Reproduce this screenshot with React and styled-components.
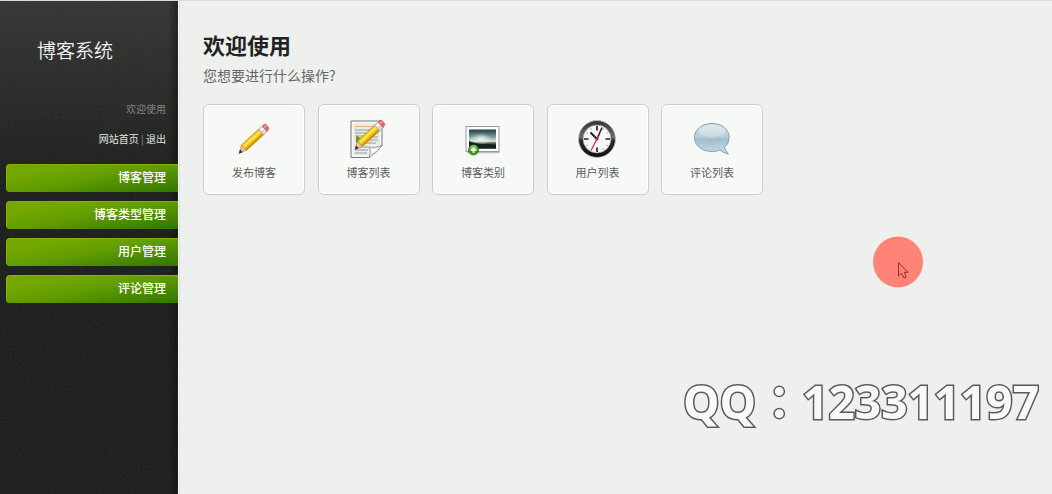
import React from "react";
import styled, { createGlobalStyle } from "styled-components";

const GlobalStyle = createGlobalStyle`
  * { box-sizing: border-box; }
  body {
    margin: 0;
    background: #edf0ed;
    color: #555;
    font-family: "Noto Sans CJK SC", sans-serif;
  }
`;

const Page = styled.div`
  position: relative;
  display: flex;
  min-height: 100vh;
  border-top: 1px solid #d9dcd9;
  overflow: hidden;
`;

const Sidebar = styled.aside`
  position: relative;
  flex: none;
  display: flex;
  flex-direction: column;
  width: 180px;
  padding: 35px 2px 0 6px;
  color: #eee;
  background:
    linear-gradient(90deg, transparent 168px, rgba(0, 0, 0, 0.4) 178px, #fff 178px, #fff 179px, #dcdfdc 179px),
    linear-gradient(#313431, #191c19 180px, #191c19);
`;

const Grain = styled.svg`
  position: absolute;
  top: 0;
  left: 0;
  width: 178px;
  height: 100%;
  opacity: 0.09;
  pointer-events: none;
`;

const Brand = styled.h1`
  margin: 0 0 38px 31px;
  font-size: 19px;
  line-height: 28px;
  font-weight: 350;
  color: #f4f5f4;
`;

const Profile = styled.div`
  padding-right: 12px;
  text-align: right;
  font-size: 10px;
  line-height: 14px;
  color: #808280;
`;

const Links = styled.p`
  margin: 16px 0 18px;
  color: #888;
`;

const ProfileLink = styled.a`
  color: #e4e6e4;
  text-decoration: none;
`;

const Menu = styled.ul`
  position: relative;
  display: flex;
  flex-direction: column;
  gap: 9px;
  margin: 0;
  padding: 0;
  list-style: none;
`;

const MenuLink = styled.a`
  display: block;
  height: 28px;
  padding-right: 12px;
  border: solid #86b300;
  border-width: 1px 0 0 1px;
  border-radius: 4px 0 0 4px;
  background: linear-gradient(170deg, #74a800 20%, #619c00 50%, #367900 95%);
  text-align: right;
  font-size: 12px;
  line-height: 24px;
  font-weight: 500;
  color: #fff;
  text-decoration: none;
`;

const Main = styled.main`
  flex: 1;
  min-width: 0;
  padding: 27px 24px 24px 23px;
`;

const Heading = styled.h2`
  margin: 0;
  font-size: 22px;
  line-height: 32px;
  font-weight: 700;
  color: #222;
`;

const Intro = styled.p`
  margin: 4px 0 18px;
  font-size: 14px;
  line-height: 22px;
  font-weight: 400;
  color: #666;
`;

const Shortcuts = styled.ul`
  display: grid;
  grid-template-columns: repeat(5, 102px);
  justify-content: space-between;
  max-width: 560px;
  margin: 0;
  padding: 0;
  list-style: none;
`;

const Shortcut = styled.a`
  display: flex;
  flex-direction: column;
  align-items: center;
  height: 91px;
  padding-top: 14px;
  border: 1px solid #ccc;
  border-radius: 6px;
  background: #f7f9f7;
  box-shadow: inset 0 0 0 1px #fff;
  font-size: 11px;
  line-height: 16px;
  color: #5c5c5c;
  text-decoration: none;
`;

const Picture = styled.svg`
  width: 40px;
  height: 40px;
  margin-bottom: 5px;
`;

const Contact = styled.div`
  position: absolute;
  right: 13px;
  bottom: 60px;
  font-family: "Open Sans", "Noto Sans CJK TC", sans-serif;
  font-size: 46px;
  line-height: 66px;
  font-weight: 700;
  white-space: nowrap;
  color: #f8faf8;
  -webkit-text-stroke: 3px #5a5a5a;
  paint-order: stroke fill;
  will-change: transform;
  pointer-events: none;
`;

const Pointer = styled.svg`
  position: absolute;
  top: 235px;
  left: 873px;
  width: 50px;
  height: 52px;
  pointer-events: none;
`;

function PencilShape() {
  return (
    <g>
      <path d="M4.500 35 L7 26 L12.500 32Z" fill="#e8c39a" stroke="#a87c50" strokeWidth=".6" />
      <path d="M4 35.500 L5.500 31 L8.500 34Z" fill="#333" />
      <path d="M7 26 L26 8.500 L31.500 14.500 L12.500 32Z" fill="#f0bf16" stroke="#b98a00" strokeWidth=".7" />
      <path d="M8.500 27 L26.500 10.300 L28.300 12.200 L10 29Z" fill="#ffe25a" />
      <path d="M11.500 30.500 L29.800 13.600 L31.300 15 L12.700 31.700Z" fill="#cf9200" />
      <path d="M25.500 9 L29.500 5.500 L35 11.300 L31.200 15Z" fill="#d5d8e2" stroke="#9ba0ac" strokeWidth=".7" />
      <path d="M27 9 L29.600 6.800 L31.500 8.800 L29 11Z" fill="#fff" />
      <path d="M29.500 5.500 L32 3.600 Q33 3 34 4 L36.500 7 Q37.200 8 36.500 9 L35 11.300Z" fill="#e9635f" stroke="#c64b48" strokeWidth=".6" />
      <path d="M31 5.800 L33 4.500 L34.500 6 L32.500 7.500Z" fill="#ffa19b" />
    </g>
  );
}

function PencilPicture() {
  return (
    <Picture viewBox="0 0 40 40" aria-hidden="true">
      <g transform="translate(1 2) scale(.92)"><PencilShape /></g>
    </Picture>
  );
}

function ArticlePicture() {
  return (
    <Picture viewBox="0 0 40 40" aria-hidden="true">
      <path d="M2 2H33V26.500Q28 32 20 38.500H2Z" fill="#f8f8f8" stroke="#777" />
      <path d="M4 4H31V26H21L19 36.500H4Z" fill="#e9ebeb" />
      <path d="M6 7.500H29" stroke="#edaa87" />
      <path d="M6 11H29M6 14H29M17 18H29M17 21H29M17 24H27M6 28H20M6 31H19M6 34H18" stroke="#b4b7b7" strokeWidth="1.500" />
      <path d="M7 16H16V24H7Z" fill="#679238" />
      <path d="M7 16 L12 20 L16 18V16Z" fill="#b2d88c" />
      <path d="M20 38.500 Q22 34 20.500 28 Q26 29 33 26.500 Q29 33 20 38.500Z" fill="#e2e4e4" stroke="#888" strokeWidth=".8" />
      <path d="M22 35 Q23.500 33 22.500 30 Q26 30.500 30 29Z" fill="#fff" />
      <g transform="translate(2 -2) scale(.92)"><PencilShape /></g>
    </Picture>
  );
}

function PhotoPicture() {
  return (
    <Picture viewBox="0 0 40 40" aria-hidden="true">
      <defs>
        <linearGradient id="sky" x1="0" y1="0" x2="0" y2="1">
          <stop offset="0" stopColor="#1e3e42" />
          <stop offset=".35" stopColor="#6f9194" />
          <stop offset=".62" stopColor="#dbe5d9" />
          <stop offset=".7" stopColor="#637067" />
          <stop offset=".85" stopColor="#101612" />
        </linearGradient>
        <radialGradient id="glow">
          <stop offset="0" stopColor="#f4fbea" stopOpacity=".9" />
          <stop offset="1" stopColor="#f4fbea" stopOpacity="0" />
        </radialGradient>
      </defs>
      <path d="M4 33.500 H36.500" stroke="#bbb" strokeWidth="1.500" />
      <rect x="3" y="7.500" width="33" height="25" fill="#fff" stroke="#999" />
      <rect x="6" y="10.500" width="27" height="19" fill="url(#sky)" />
      <ellipse cx="18" cy="20" rx="11" ry="6" fill="url(#glow)" />
      <path d="M6 22 Q12 25 20 25 T33 26V29.500H6Z" fill="#14201a" />
      <circle cx="10.500" cy="31" r="5" fill="#3d9a17" stroke="#267007" strokeWidth=".8" />
      <path d="M6.500 30 A4 4 0 0 1 14.500 30Z" fill="#78c04c" />
      <path d="M10.500 28.200V33.800M7.700 31H13.300" stroke="#fff" strokeWidth="1.800" />
    </Picture>
  );
}

function ClockPicture() {
  return (
    <Picture viewBox="0 0 40 40" aria-hidden="true">
      <defs>
        <linearGradient id="rim" x1="0" y1="0" x2="0" y2="1">
          <stop offset="0" stopColor="#333" />
          <stop offset=".45" stopColor="#6a6a6a" />
          <stop offset=".55" stopColor="#262626" />
          <stop offset="1" stopColor="#111" />
        </linearGradient>
      </defs>
      <g transform="translate(-1 0)">
        <circle cx="20" cy="20" r="18.500" fill="url(#rim)" stroke="#bbb" strokeWidth=".8" />
        <circle cx="20" cy="20" r="14" fill="#f7f7f7" stroke="#888" strokeWidth=".6" />
        <path d="M20 7V11.500M20 28.500V33M7 20H11.500M28.500 20H33" stroke="#222" strokeWidth="1.700" />
        <path d="M26 9.600V10.600M30 13.500V14.500M30 26V27M26 29.600V30.600M10 13.500V14.500M10 26V27M14 9.600V10.600" stroke="#777" />
        <path d="M20 20 L13.500 13.500" stroke="#1c1c1c" strokeWidth="2" />
        <path d="M20 20 L25 8.500" stroke="#1c1c1c" strokeWidth="1.500" />
        <path d="M21.500 17 L14 31.500" stroke="#d42c43" strokeWidth="1.300" />
        <circle cx="20" cy="20" r="1.600" fill="#c3283b" />
      </g>
    </Picture>
  );
}

function CommentPicture() {
  return (
    <Picture viewBox="0 0 40 40" aria-hidden="true">
      <defs>
        <linearGradient id="bubble" x1="0" y1="0" x2="0" y2="1">
          <stop offset="0" stopColor="#d6e3e9" />
          <stop offset=".48" stopColor="#b5cbd6" />
          <stop offset=".5" stopColor="#a0bdcb" />
          <stop offset="1" stopColor="#c9dde4" />
        </linearGradient>
      </defs>
      <path d="M20 4.500 C10 4.500 2.500 10.500 2.500 18.500 C2.500 26.500 10 32.500 20 32.500 Q24.500 32.500 28 31 Q31 34 36.500 35 Q33.500 32 32.500 28.500 Q37.200 24.500 37.200 18.500 C37.200 10.500 30 4.500 20 4.500Z" fill="url(#bubble)" stroke="#8fa0a6" />
      <ellipse cx="20" cy="12" rx="13" ry="6" fill="#fff" opacity=".25" />
    </Picture>
  );
}

const menu = ["博客管理", "博客类型管理", "用户管理", "评论管理"];

const shortcuts = [
  { label: "发布博客", Icon: PencilPicture },
  { label: "博客列表", Icon: ArticlePicture },
  { label: "博客类别", Icon: PhotoPicture },
  { label: "用户列表", Icon: ClockPicture },
  { label: "评论列表", Icon: CommentPicture },
];

export default function App() {
  return (
    <Page lang="zh-CN">
      <GlobalStyle />
      <Sidebar>
        <Grain aria-hidden="true">
          <filter id="grain">
            <feTurbulence type="fractalNoise" baseFrequency="0.6" numOctaves="2" />
            <feColorMatrix type="saturate" values="0" />
          </filter>
          <rect width="100%" height="100%" filter="url(#grain)" />
        </Grain>
        <Brand>博客系统</Brand>
        <Profile>
          欢迎使用
          <Links>
            <ProfileLink href="#home">网站首页</ProfileLink> | <ProfileLink href="#logout">退出</ProfileLink>
          </Links>
        </Profile>
        <nav>
          <Menu>
            {menu.map((label) => (
              <li key={label}><MenuLink href="#menu">{label}</MenuLink></li>
            ))}
          </Menu>
        </nav>
      </Sidebar>
      <Main>
        <Heading>欢迎使用</Heading>
        <Intro>您想要进行什么操作?</Intro>
        <Shortcuts>
          {shortcuts.map(({ label, Icon }) => (
            <li key={label}>
              <Shortcut href="#open"><Icon />{label}</Shortcut>
            </li>
          ))}
        </Shortcuts>
      </Main>
      <Contact lang="zh-TW">QQ：123311197</Contact>
      <Pointer viewBox="0 0 50 52" aria-hidden="true">
        <ellipse cx="25" cy="26" rx="25" ry="25.500" fill="#ff8377" />
        <path d="M25.500 26.500V40L28.500 37.300L31 42L33.200 41L31.200 36.300H35Z" fill="#ff8377" stroke="#a02a25" />
      </Pointer>
    </Page>
  );
}
